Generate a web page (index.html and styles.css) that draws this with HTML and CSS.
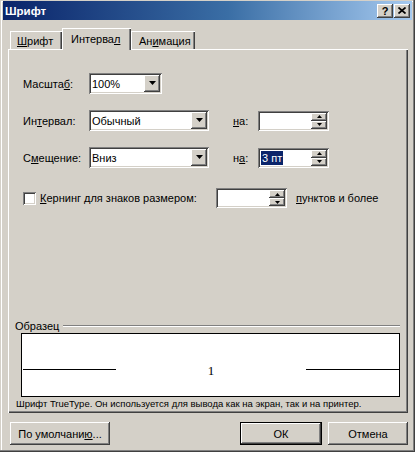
FILE: index.html
```html
<!DOCTYPE html>
<html lang="ru">
<head>
<meta charset="utf-8">
<title>Шрифт</title>
<link rel="stylesheet" href="styles.css">
</head>
<body>
<div class="window">
  <div class="titlebar">
    <span class="title">Шрифт</span>
    <div class="tb-buttons">
      <span class="tb-btn help">?</span>
      <span class="tb-btn"><svg width="8" height="7" viewBox="0 0 8 7"><path d="M0.5 0.5L7.5 6.5M7.5 0.5L0.5 6.5" stroke="#000" stroke-width="1.7" fill="none"/></svg></span>
    </div>
  </div>
  <div class="content">
    <div class="tabs">
      <div class="tab t1"><u>Ш</u>рифт</div>
      <div class="tab t2 active">Интерва<u>л</u></div>
      <div class="tab t3">Ан<u>и</u>мация</div>
    </div>
    <div class="panel">
      <div class="row first">
        <span class="lbl">Масшта<u>б</u>:</span>
        <div class="combo w-small"><span class="val">100%</span><span class="drop"><svg width="7" height="4" viewBox="0 0 7 4"><path d="M0 0H7L3.5 4Z"/></svg></span></div>
      </div>
      <div class="row">
        <span class="lbl">Ин<u>т</u>ервал:</span>
        <div class="combo w-wide"><span class="val">Обычный</span><span class="drop"><svg width="7" height="4" viewBox="0 0 7 4"><path d="M0 0H7L3.5 4Z"/></svg></span></div>
        <span class="na"><u>н</u>а:</span>
        <div class="spin"><span class="val"></span><span class="arrows"><span class="sb"><svg width="5" height="3" viewBox="0 0 5 3"><path d="M2.5 0L5 3H0Z"/></svg></span><span class="sb"><svg width="5" height="3" viewBox="0 0 5 3"><path d="M0 0H5L2.5 3Z"/></svg></span></span></div>
      </div>
      <div class="row">
        <span class="lbl">С<u>м</u>ещение:</span>
        <div class="combo w-wide"><span class="val">Вниз</span><span class="drop"><svg width="7" height="4" viewBox="0 0 7 4"><path d="M0 0H7L3.5 4Z"/></svg></span></div>
        <span class="na">н<u>а</u>:</span>
        <div class="spin"><span class="val"><span class="sel">3 пт</span></span><span class="arrows"><span class="sb"><svg width="5" height="3" viewBox="0 0 5 3"><path d="M2.5 0L5 3H0Z"/></svg></span><span class="sb"><svg width="5" height="3" viewBox="0 0 5 3"><path d="M0 0H5L2.5 3Z"/></svg></span></span></div>
      </div>
      <div class="row kern">
        <span class="check"></span>
        <span class="kern-lbl"><u>К</u>ернинг для знаков размером:</span>
        <div class="spin"><span class="val"></span><span class="arrows"><span class="sb"><svg width="5" height="3" viewBox="0 0 5 3"><path d="M2.5 0L5 3H0Z"/></svg></span><span class="sb"><svg width="5" height="3" viewBox="0 0 5 3"><path d="M0 0H5L2.5 3Z"/></svg></span></span></div>
        <span class="pts"><u>п</u>унктов и более</span>
      </div>
      <div class="sample">
        <div class="sample-head"><span>Образец</span><span class="etch"></span></div>
        <div class="preview">
          <span class="pline"></span>
          <span class="pchar">1</span>
          <span class="pline"></span>
        </div>
        <div class="desc">Шрифт TrueType. Он используется для вывода как на экран, так и на принтер.</div>
      </div>
    </div>
    <div class="buttons">
      <span class="btn b-default">По умолчани<u>ю</u>...</span>
      <span class="spacer"></span>
      <span class="btn b-ok">ОК</span>
      <span class="btn b-cancel">Отмена</span>
    </div>
  </div>
</div>
</body>
</html>
```
FILE: styles.css
```css
* { box-sizing: border-box; }
html, body { margin: 0; padding: 0; }
body {
  width: 415px;
  height: 452px;
  overflow: hidden;
  background: #d4d0c8;
  font-family: "Liberation Sans", Arial, sans-serif;
  font-size: 11px;
  color: #000;
}
u { text-decoration: underline; text-underline-offset: 1px; }

.window {
  width: 415px;
  height: 452px;
  padding: 1px 3px 3px 3px;
  box-shadow: inset -1px -1px #404040, inset -2px -2px #808080, inset 1px 1px #d4d0c8, inset 2px 2px #fff;
}

.titlebar {
  height: 19px;
  display: flex;
  align-items: center;
  justify-content: space-between;
  padding: 0 2px 0 2px;
  background: linear-gradient(to right, #0a246a 0%, #3a6ea5 55%, #a6caf0 100%);
}
.title { color: #fff; font-weight: bold; font-size: 11.5px; }
.tb-buttons { display: flex; gap: 1px; }
.tb-btn {
  width: 16px;
  height: 14px;
  background: #d4d0c8;
  box-shadow: inset -1px -1px #404040, inset 1px 1px #fff, inset -2px -2px #808080;
  display: flex;
  align-items: center;
  justify-content: center;
  font-weight: bold;
  font-size: 11px;
  line-height: 1;
}
.tb-btn.help { padding-top: 1px; }

.content { padding: 0 4px 0 5px; }

.tabs {
  height: 29px;
  display: flex;
  align-items: flex-end;
  padding-left: 2px;
  position: relative;
  z-index: 1;
}
.tab {
  height: 18px;
  display: flex;
  align-items: center;
  padding: 1px 0 0 7px;
  background: #d4d0c8;
  box-shadow: inset 1px 1px #fff, inset -1px 0 #404040, inset -2px 0 #808080;
}
.t1 { width: 52px; }
.t2 { width: 69px; height: 22px; margin-bottom: -1px; padding-left: 9px; padding-top: 0; }
.t3 { width: 64px; padding-left: 8px; }

.panel {
  height: 364px;
  display: flex;
  flex-direction: column;
  padding: 24px 8px 3px 15px;
  box-shadow: inset 1px 1px #fff, inset -1px -1px #404040, inset -2px -2px #808080;
}

.row { display: flex; align-items: center; height: 21px; margin-top: 16px; }
.row.first { margin-top: 0; }
.row.kern { margin-top: 20px; height: 20px; }
.lbl { width: 66px; }
.na { width: 25px; margin-left: 24px; }

.combo {
  height: 21px;
  padding: 2px;
  display: flex;
  align-items: center;
  justify-content: space-between;
  background: #fff;
  box-shadow: inset 1px 1px #808080, inset -1px -1px #fff, inset 2px 2px #404040, inset -2px -2px #d4d0c8;
}
.w-small { width: 73px; }
.w-wide { width: 120px; }
.val { padding-left: 1px; display: flex; align-items: center; height: 100%; }
.drop {
  width: 16px;
  height: 17px;
  background: #d4d0c8;
  box-shadow: inset -1px -1px #404040, inset 1px 1px #fff, inset -2px -2px #808080;
  display: flex;
  align-items: center;
  justify-content: center;
  padding-bottom: 1px;
}

.spin {
  width: 71px;
  height: 20px;
  padding: 2px;
  display: flex;
  justify-content: space-between;
  background: #fff;
  box-shadow: inset 1px 1px #808080, inset -1px -1px #fff, inset 2px 2px #404040, inset -2px -2px #d4d0c8;
}
.arrows { width: 16px; display: flex; flex-direction: column; }
.sb {
  flex: 1;
  background: #d4d0c8;
  box-shadow: inset -1px -1px #404040, inset 1px 1px #fff, inset -2px -2px #808080;
  display: flex;
  align-items: center;
  justify-content: center;
}
.sel { background: #0a246a; color: #fff; padding: 0 1px; line-height: 14px; }

.check {
  width: 13px;
  height: 13px;
  margin-right: 4px;
  background: #fff;
  box-shadow: inset 1px 1px #808080, inset -1px -1px #fff, inset 2px 2px #404040, inset -2px -2px #d4d0c8;
}
.kern-lbl { width: 176px; }
.pts { margin-left: 9px; }

.sample { margin-top: auto; margin-left: -8px; display: flex; flex-direction: column; }
.sample-head { display: flex; align-items: center; height: 13px; }
.etch { flex: 1; margin-left: 4px; height: 2px; border-top: 1px solid #808080; border-bottom: 1px solid #fff; }
.preview {
  margin: 1px 0 0 6px;
  height: 64px;
  border: 1px solid #000;
  background: #fff;
  display: flex;
  align-items: flex-start;
  justify-content: space-between;
  padding: 35px 0 0 1px;
}
.pline { width: 93px; height: 1px; background: #000; }
.pchar { font-family: "Liberation Serif", "Times New Roman", serif; font-size: 13px; line-height: 15px; margin-top: -6px; }
.desc { font-size: 9.5px; margin: 0 0 0 1px; height: 13px; line-height: 13px; }

.buttons { display: flex; margin-top: 9px; height: 23px; padding-left: 2px; }
.spacer { flex: 1; }
.btn {
  height: 23px;
  display: flex;
  align-items: center;
  justify-content: center;
  background: #d4d0c8;
  box-shadow: inset -1px -1px #404040, inset 1px 1px #fff, inset -2px -2px #808080;
}
.b-default { width: 100px; }
.b-ok { width: 82px; box-shadow: inset 0 0 0 1px #000, inset -2px -2px #404040, inset 2px 2px #fff, inset -3px -3px #808080; }
.b-cancel { width: 80px; margin-left: 6px; }
```
